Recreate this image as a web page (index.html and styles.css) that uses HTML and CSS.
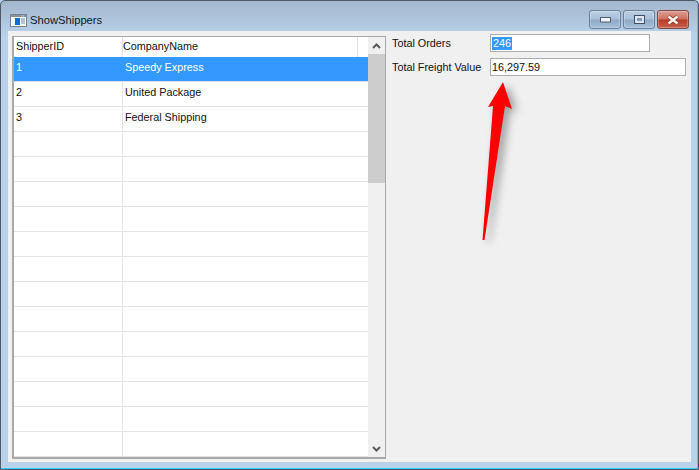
FILE: index.html
```html
<!DOCTYPE html>
<html lang="en">
<head>
    <meta charset="UTF-8" />
    <title>ShowShippers</title>
    <link rel="stylesheet" href="styles.css">
</head>
<body>
    <div class="window">
        <div class="titlebar">
            <svg class="app-icon" width="17" height="13" viewBox="0 0 17 13">
                <rect x="0.5" y="0.5" width="16" height="12" fill="#fbfcfe" stroke="#76828f" />
                <rect x="1" y="1" width="15" height="2" fill="#8391a3" />
                <path d="M11 2h1M13 2h1" stroke="#d5dce5" stroke-width="1" />
                <rect x="5" y="4" width="5" height="7" fill="#0f6fd8" />
                <path d="M11 5h4M11 7h4M11 9h4" stroke="#6d88a8" stroke-width="1" />
            </svg>
            <span class="title">ShowShippers</span>
            <div class="caption-buttons">
                <div class="cap-btn">
                    <svg width="11" height="6" viewBox="0 0 11 6"><rect x="0.5" y="0.5" width="10" height="4.5" fill="#f2f4f7" stroke="#4e5f75" /></svg>
                </div>
                <div class="cap-btn">
                    <svg width="11" height="9" viewBox="0 0 11 9"><rect x="0.5" y="0.5" width="10" height="8" fill="#dfe6ef" stroke="#3f4f63" /><rect x="3" y="3" width="5" height="3" fill="#7f9cc0" /></svg>
                </div>
                <div class="cap-btn close">
                    <svg width="14" height="10" viewBox="0 0 14 10"><path d="M2.5 1.5 L11.5 8.5 M11.5 1.5 L2.5 8.5" stroke="#7a3326" stroke-width="4" /><path d="M2.5 1.5 L11.5 8.5 M11.5 1.5 L2.5 8.5" stroke="#f6f1ef" stroke-width="2.6" /></svg>
                </div>
            </div>
        </div>

        <div class="client">
            <div class="grid">
                <div class="grid-body">
                    <div class="row header">
                        <div class="cell id">ShipperID</div>
                        <div class="cell name">CompanyName</div>
                        <div class="cell tail"></div>
                    </div>
                    <div class="row selected"><div class="cell id">1</div><div class="cell name">Speedy Express</div></div>
                    <div class="row"><div class="cell id">2</div><div class="cell name">United Package</div></div>
                    <div class="row"><div class="cell id">3</div><div class="cell name">Federal Shipping</div></div>
                    <div class="row"><div class="cell id"></div><div class="cell name"></div></div>
                    <div class="row"><div class="cell id"></div><div class="cell name"></div></div>
                    <div class="row"><div class="cell id"></div><div class="cell name"></div></div>
                    <div class="row"><div class="cell id"></div><div class="cell name"></div></div>
                    <div class="row"><div class="cell id"></div><div class="cell name"></div></div>
                    <div class="row"><div class="cell id"></div><div class="cell name"></div></div>
                    <div class="row"><div class="cell id"></div><div class="cell name"></div></div>
                    <div class="row"><div class="cell id"></div><div class="cell name"></div></div>
                    <div class="row"><div class="cell id"></div><div class="cell name"></div></div>
                    <div class="row"><div class="cell id"></div><div class="cell name"></div></div>
                    <div class="row"><div class="cell id"></div><div class="cell name"></div></div>
                    <div class="row"><div class="cell id"></div><div class="cell name"></div></div>
                    <div class="row"><div class="cell id"></div><div class="cell name"></div></div>
                </div>
                <div class="scrollbar">
                    <svg class="scroll-arrow" width="9" height="6" viewBox="0 0 9 6"><path d="M1 5 L4.5 1.5 L8 5" fill="none" stroke="#5a5a5a" stroke-width="2" /></svg>
                    <div class="track"><div class="thumb"></div></div>
                    <svg class="scroll-arrow" width="9" height="6" viewBox="0 0 9 6"><path d="M1 1 L4.5 4.5 L8 1" fill="none" stroke="#5a5a5a" stroke-width="2" /></svg>
                </div>
            </div>

            <div class="panel">
                <div class="field">
                    <label class="field-label">Total Orders</label>
                    <div class="textbox short"><span class="sel">246</span></div>
                </div>
                <div class="field">
                    <label class="field-label">Total Freight Value</label>
                    <div class="textbox long">16,297.59</div>
                </div>
            </div>
        </div>

        <svg class="arrow" width="60" height="180" viewBox="470 75 60 180">
            <polygon points="503,82 512,109 505,106 484.5,240 482.5,240 493,106 488,107" fill="#ff0000" />
        </svg>
    </div>
</body>
</html>
```

FILE: styles.css
```css
html, body {
    margin: 0;
    padding: 0;
    background-color: #b9d1ea;
}
.window {
    position: relative;
    box-sizing: border-box;
    width: 699px;
    height: 470px;
    padding: 0 7px 7px 7px;
    display: flex;
    flex-direction: column;
    font-family: "Liberation Sans", Arial, sans-serif;
    font-size: 10.8px;
    color: #111;
    background: linear-gradient(to bottom, #a3b6cd 0, #b9d1ea 34px);
    border: 1px solid #4f5a66;
    border-radius: 5px 5px 0 0;
    box-shadow: inset -1px -1px 0 #2fd0e8;
}
.titlebar {
    display: flex;
    align-items: center;
    height: 30px;
    flex: none;
}
.app-icon {
    margin-left: 2px;
    margin-top: 8px;
}
.title {
    margin-left: 3px;
    margin-top: 7px;
    font-size: 11.2px;
    color: #10171f;
}
.caption-buttons {
    margin-left: auto;
    margin-right: 2px;
    align-self: flex-start;
    margin-top: 9px;
    display: flex;
    gap: 2px;
}
.cap-btn {
    box-sizing: border-box;
    width: 32px;
    height: 19px;
    display: flex;
    align-items: center;
    justify-content: center;
    border: 1px solid #6a7f99;
    border-radius: 3px;
    box-shadow: inset 0 0 0 1px rgba(255, 255, 255, 0.25);
    background: linear-gradient(to bottom, #bccfe3 0, #a9c0d9 48%, #8fa9c6 52%, #a6c0db 100%);
}
.cap-btn.close {
    border-color: #7d4a42;
    background: linear-gradient(to bottom, #dd9f93 0, #cf6f5f 48%, #b93b26 52%, #c9604c 100%);
}
.client {
    flex: 1;
    display: flex;
    background-color: #f0f0f0;
    padding: 5px 0 3px 4px;
    min-height: 0;
}
.grid {
    box-sizing: border-box;
    width: 374px;
    flex: none;
    display: flex;
    background-color: #fff;
    border-style: solid;
    border-color: #a8a8a8;
    border-width: 1px 1px 2px 2px;
}
.grid-body {
    flex: 1;
    overflow: hidden;
}
.row {
    display: flex;
    box-sizing: border-box;
    height: 25px;
    border-bottom: 1px solid #e3e3e3;
}
.row.header {
    height: 20px;
    border-bottom: none;
}
.cell {
    box-sizing: border-box;
    line-height: 20px;
    white-space: nowrap;
}
.header .cell {
    line-height: 19px;
}
.cell.id {
    width: 109px;
    padding-left: 2px;
    border-right: 1px solid #e3e3e3;
}
.cell.name {
    flex: 1;
    padding-left: 2px;
}
.header .cell.name {
    flex: none;
    width: 235px;
    padding-left: 0;
    border-right: 1px solid #e3e3e3;
}
.header .cell.tail {
    flex: 1;
}
.row.selected {
    background-color: #3399ff;
    color: #fff;
}
.row.selected .cell.id {
    border-right-color: #3399ff;
}
.scrollbar {
    width: 17px;
    flex: none;
    display: flex;
    flex-direction: column;
    align-items: center;
    background-color: #f0f0f0;
}
.scroll-arrow {
    flex: none;
    margin: 6px 0 5px;
}
.track {
    flex: 1;
    width: 100%;
}
.thumb {
    height: 129px;
    background-color: #cdcdcd;
}
.panel {
    flex: 1;
    padding: 0 5px 0 6px;
    display: flex;
    flex-direction: column;
    gap: 6px;
}
.field {
    display: flex;
    align-items: center;
    height: 18px;
    margin-top: -2px;
}
.field + .field {
    margin-top: 0;
}
.field-label {
    width: 98px;
    flex: none;
}
.textbox {
    box-sizing: border-box;
    height: 18px;
    padding-left: 1px;
    line-height: 16px;
    background-color: #fff;
    border: 1px solid #abadb3;
}
.textbox.short {
    width: 160px;
}
.textbox.long {
    width: 196px;
}
.sel {
    display: inline-block;
    height: 13px;
    line-height: 13px;
    padding: 0 1px;
    background-color: #3399ff;
    color: #fff;
}
.arrow {
    position: absolute;
    left: 469px;
    top: 74px;
    overflow: visible;
    filter: drop-shadow(5px 3px 4px rgba(0, 0, 0, 0.35));
}
```
